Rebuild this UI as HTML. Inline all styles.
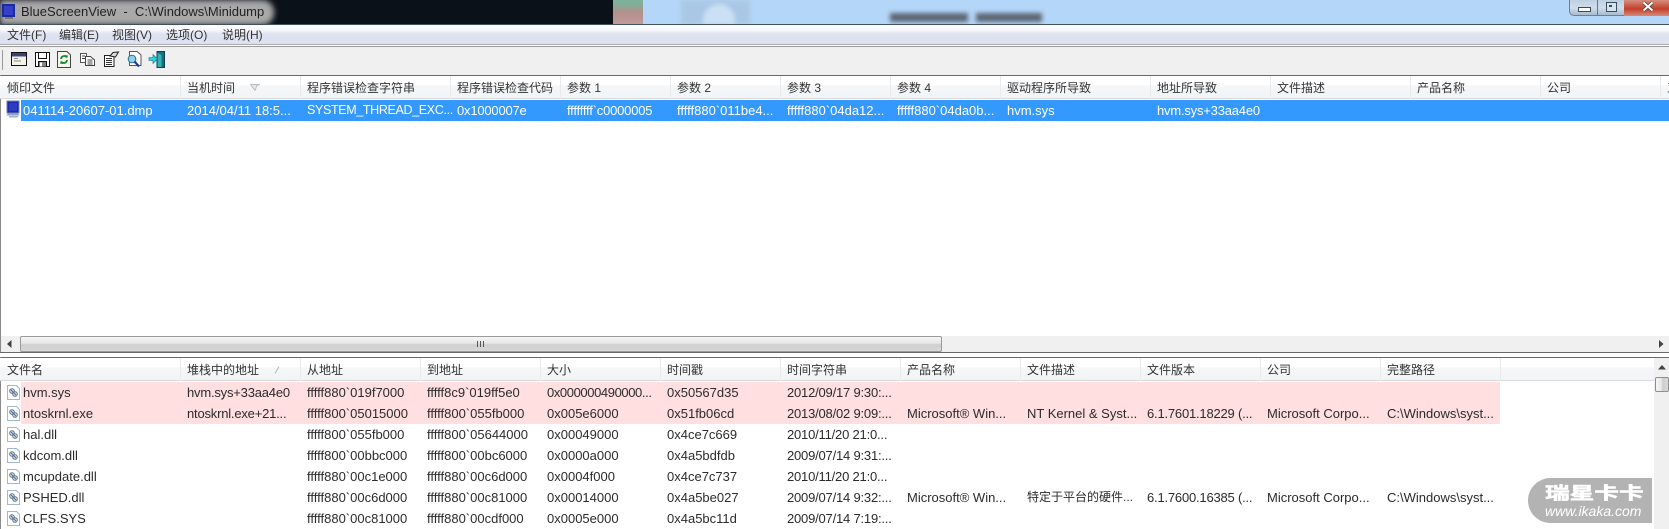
<!DOCTYPE html>
<html lang="zh">
<head>
<meta charset="utf-8">
<title>BlueScreenView</title>
<style>
html,body{margin:0;padding:0;background:#fff}
#w{position:relative;width:1669px;height:529px;overflow:hidden;background:#fff;font-family:"Liberation Sans","Noto Sans CJK SC",sans-serif;font-size:13px;color:#2b2b2b;filter:blur(.3px)}
.a{position:absolute}
.r{position:absolute;left:0;width:1669px;height:21px;line-height:21px}
.r span{position:absolute;top:0;white-space:nowrap}
.n{letter-spacing:-.2px}
.h{position:absolute;height:24px;line-height:24px;font-size:12px;color:#333;white-space:nowrap}
.s{position:absolute;width:1px;background:#e8eaec}
.m{position:absolute;top:26px;height:18px;line-height:18px;font-size:12px;color:#333;white-space:nowrap}
.hb{position:absolute;left:0;background:linear-gradient(#fff 0,#fff 40%,#f4f6f8 45%,#f2f4f6 100%);border-bottom:1px solid #d8dade}
svg{position:absolute;display:block;overflow:visible}
</style>
</head>
<body>
<div id="w">
<!-- title bar background -->
<div class="a" style="left:0;top:0;width:1669px;height:25px;background:#b4d6f8"></div>
<div class="a" style="left:681px;top:0;width:69px;height:25px;background:#a9c8e6;filter:blur(2px)"></div>
<div class="a" style="left:703px;top:4px;width:32px;height:21px;background:#cbe0f4;border-radius:16px 16px 0 0;filter:blur(2px)"></div>
<div class="a" style="left:0;top:0;width:613px;height:25px;background:#0b1118"></div>
<div class="a" style="left:613px;top:0;width:30px;height:25px;background:linear-gradient(#7fb09a 0,#7fb09a 15%,#b58f8a 50%,#bf9c9c 100%)"></div>
<div class="a" style="left:0;top:0;width:274px;height:25px;background:#a9a9a9;border-radius:0 12px 12px 0;filter:blur(3px)"></div>
<div class="a" style="left:890px;top:13px;width:78px;height:9px;background:#5c6672;filter:blur(2.5px)"></div>
<div class="a" style="left:976px;top:13px;width:66px;height:9px;background:#5c6672;filter:blur(2.5px)"></div>
<svg style="left:2px;top:3px" width="14" height="18" viewBox="0 0 14 18"><rect x="0" y="1" width="13" height="13" fill="#1a2aa0"/><rect x="2" y="3" width="9" height="9" fill="#3340c8"/><rect x="3" y="14" width="8" height="2" fill="#777"/></svg>
<div class="a" style="left:21px;top:3px;line-height:18px;font-size:13px;color:#222;white-space:pre">BlueScreenView  -  C:\Windows\Minidump</div>
<!-- window buttons -->
<div class="a" style="left:1569px;top:0;width:100px;height:16px;border:1px solid #6f7f90;border-top:0;border-right:0;border-radius:0 0 0 5px;box-sizing:border-box;background:linear-gradient(#bdd0e2,#cfdeec 50%,#a8bccf)"></div>
<div class="a" style="left:1597px;top:0;width:1px;height:15px;background:#66778a"></div>
<div class="a" style="left:1624px;top:0;width:45px;height:16px;background:linear-gradient(#d68f80,#c2402c 55%,#d88a78)"></div>
<div class="a" style="left:1578px;top:7px;width:11px;height:3px;border:1px solid #3d4a58;background:#fff"></div>
<div class="a" style="left:1606px;top:2px;width:9px;height:8px;border:1px solid #3d4a58;background:#d6e4f0"></div>
<div class="a" style="left:1609px;top:5px;width:3px;height:2px;background:#3d4a58"></div>
<svg style="left:1642px;top:2px" width="12" height="9" viewBox="0 0 12 9"><path d="M1.5 .5L10.5 8.500M10.5 .5L1.500 8.500" stroke="#4a3a38" stroke-width="3.4"/><path d="M1.5 .5L10.5 8.500M10.5 .5L1.500 8.500" stroke="#fff" stroke-width="2"/></svg>
<div class="a" style="left:0;top:24px;width:1669px;height:1px;background:#3f5060"></div>
<!-- menu -->
<div class="a" style="left:0;top:25px;width:1669px;height:20px;background:linear-gradient(#fff 0,#f5f7fc 25%,#dfe3f1 45%,#dde1ef 100%)"></div>
<div class="a" style="left:0;top:44px;width:1669px;height:1px;background:#a8aab0"></div>
<div class="m" style="left:7px">文件(F)</div>
<div class="m" style="left:59px">编辑(E)</div>
<div class="m" style="left:112px">视图(V)</div>
<div class="m" style="left:166px">选项(O)</div>
<div class="m" style="left:222px">说明(H)</div>
<!-- toolbar -->
<div class="a" style="left:0;top:45px;width:1669px;height:1px;background:#fff"></div>
<div class="a" style="left:0;top:46px;width:1669px;height:1px;background:#999"></div>
<div class="a" style="left:0;top:47px;width:1669px;height:28px;background:#f0f0f0"></div>
<div class="a" style="left:2px;top:50px;width:1px;height:20px;background:#9a9a9a"></div>
<svg style="left:11px;top:52px" width="16" height="14" viewBox="0 0 16 14"><rect x=".5" y=".5" width="15" height="13" fill="#f4f2e6" stroke="#111"/><rect x="1" y="1" width="14" height="3.500" fill="#3a4470"/><path d="M3 6.500h4M3 9h7" stroke="#888"/></svg>
<svg style="left:35px;top:52px" width="15" height="15" viewBox="0 0 15 15"><path d="M.5.500H14.500V14.500H.5Z" fill="#fff" stroke="#111"/><path d="M3.500 1V6.500H11.500V1" fill="none" stroke="#111"/><path d="M3.500 14.500V9.500H11.500V14.500" fill="#888" stroke="#111"/><rect x="5" y="10.500" width="2" height="4" fill="#fff"/></svg>
<svg style="left:57px;top:51px" width="14" height="17" viewBox="0 0 14 17"><path d="M.5.500H10L13.500 4V16.500H.5Z" fill="#f6f6ee" stroke="#444"/><path d="M4 8A3.200 3.200 0 0 1 9.500 6M10 9A3.200 3.200 0 0 1 4.500 11" fill="none" stroke="#108a28" stroke-width="1.800"/><path d="M8 4L11 4.500 10 7.500ZM6 13L3 12.500 4 9.500Z" fill="#108a28"/></svg>
<svg style="left:80px;top:53px" width="15" height="13" viewBox="0 0 15 13"><path d="M.5.500H6.500V9.500H.5Z" fill="#fff" stroke="#555"/><path d="M5.500 3.500H10.500L14.500 7V12.500H5.500Z" fill="#fff" stroke="#444"/><path d="M2 3h3M2 5.500h3M7.500 7h5M7.500 9h5M7.500 11h5" stroke="#444"/></svg>
<svg style="left:103px;top:51px" width="16" height="16" viewBox="0 0 16 16"><path d="M1.500 4.500H11V15.500H1.500Z" fill="#fff" stroke="#222"/><path d="M3 7.500h6M3 9.500h6M3 11.500h6M3 13.500h6" stroke="#333"/><path d="M7 5L10 1.500 15.500 1 12.500 6Z" fill="#ddd" stroke="#222"/></svg>
<svg style="left:127px;top:51px" width="15" height="17" viewBox="0 0 15 17"><path d="M2.500.5H10L14 4V14.500H2.500Z" fill="#fff" stroke="#555"/><circle cx="5" cy="8" r="3.800" fill="#8ed2e8" stroke="#2a6a9a"/><path d="M7.500 10.500L12 15.500" stroke="#1c3c94" stroke-width="2.200"/></svg>
<svg style="left:149px;top:51px" width="17" height="17" viewBox="0 0 17 17"><path d="M8 .5H15.500V16.500H8Z" fill="#1b6d7c" stroke="#0d3f4c"/><path d="M8.500 2L12.500 4V16H8.500Z" fill="#34b2bc"/><path d="M0 6.500H4V3.500L8.500 8 4 12.500V9.500H0Z" fill="#2dd4dc" stroke="#12707c" stroke-width=".6"/></svg>
<!-- top list -->
<div class="a" style="left:0;top:75px;width:1669px;height:1px;background:#696969"></div>
<div class="a" style="left:0;top:75px;width:1px;height:278px;background:#8a8a8a"></div>
<div class="hb" style="top:76px;width:1669px;height:22px"></div>
<div class="s" style="left:180px;top:76px;height:23px"></div>
<div class="s" style="left:300px;top:76px;height:23px"></div>
<div class="s" style="left:450px;top:76px;height:23px"></div>
<div class="s" style="left:560px;top:76px;height:23px"></div>
<div class="s" style="left:670px;top:76px;height:23px"></div>
<div class="s" style="left:780px;top:76px;height:23px"></div>
<div class="s" style="left:890px;top:76px;height:23px"></div>
<div class="s" style="left:1000px;top:76px;height:23px"></div>
<div class="s" style="left:1150px;top:76px;height:23px"></div>
<div class="s" style="left:1270px;top:76px;height:23px"></div>
<div class="s" style="left:1410px;top:76px;height:23px"></div>
<div class="s" style="left:1540px;top:76px;height:23px"></div>
<div class="s" style="left:1660px;top:76px;height:23px"></div>
<div class="h" style="left:7px;top:76px">倾印文件</div>
<div class="h" style="left:187px;top:76px">当机时间</div>
<svg style="left:250px;top:84px" width="11" height="7" viewBox="0 0 11 7"><path d="M.5.500H10L7 1.500 5 6.500Z" fill="#e6e6e6" stroke="#aeb4ba" stroke-width=".8"/></svg>
<div class="h" style="left:307px;top:76px">程序错误检查字符串</div>
<div class="h" style="left:457px;top:76px">程序错误检查代码</div>
<div class="h" style="left:567px;top:76px">参数 1</div>
<div class="h" style="left:677px;top:76px">参数 2</div>
<div class="h" style="left:787px;top:76px">参数 3</div>
<div class="h" style="left:897px;top:76px">参数 4</div>
<div class="h" style="left:1007px;top:76px">驱动程序所导致</div>
<div class="h" style="left:1157px;top:76px">地址所导致</div>
<div class="h" style="left:1277px;top:76px">文件描述</div>
<div class="h" style="left:1417px;top:76px">产品名称</div>
<div class="h" style="left:1547px;top:76px">公司</div>
<div class="h" style="left:1667px;top:76px">工</div>
<!-- selected row -->
<div class="a" style="left:21px;top:100px;width:1648px;height:21px;background:#3399ff"></div>
<svg style="left:6px;top:101px" width="15" height="18" viewBox="0 0 15 18"><rect x="1" y="0" width="12" height="12" fill="#1c2cb0"/><path d="M1 0h12v12H1Z" fill="none" stroke="#6f80a8"/><rect x="3" y="2" width="8" height="8" fill="#2e3cc4"/><path d="M0 14.500L3 12H11L14 14.500Z" fill="#8fa0b8"/><rect x="3" y="15" width="9" height="1.500" fill="#9cb0c8"/></svg>
<div class="r" style="top:100px;color:#fff">
<span style="left:23px">041114-20607-01.dmp</span>
<span style="left:187px">2014/04/11 18:5...</span>
<span style="left:307px;font-size:12.500px;letter-spacing:-.35px">SYSTEM_THREAD_EXC...</span>
<span style="left:457px" class="n">0x1000007e</span>
<span style="left:567px" class="n">ffffffff`c0000005</span>
<span style="left:677px">fffff880`011be4...</span>
<span style="left:787px">fffff880`04da12...</span>
<span style="left:897px">fffff880`04da0b...</span>
<span style="left:1007px">hvm.sys</span>
<span style="left:1157px" class="n">hvm.sys+33aa4e0</span>
</div>
<!-- horizontal scrollbar -->
<div class="a" style="left:1px;top:336px;width:1668px;height:16px;background:#f0f0f0"></div>
<svg style="left:7px;top:340px" width="5" height="8" viewBox="0 0 5 8"><path d="M4.500 0V8L0 4Z" fill="#444"/></svg>
<div class="a" style="left:20px;top:336px;width:922px;height:16px;box-sizing:border-box;border:1px solid #9a9a9a;border-radius:2px;background:linear-gradient(#f6f6f6,#e6e6e6 45%,#cfcfcf 55%,#d8d8d8)"></div>
<div class="a" style="left:477px;top:341px;width:7px;height:6px;background:repeating-linear-gradient(90deg,#555 0,#555 1px,transparent 1px,transparent 3px)"></div>
<svg style="left:1659px;top:340px" width="5" height="8" viewBox="0 0 5 8"><path d="M0 0V8L4.500 4Z" fill="#444"/></svg>
<div class="a" style="left:0;top:352px;width:1669px;height:1px;background:#696969"></div>
<!-- bottom list -->
<div class="a" style="left:0;top:357px;width:1669px;height:1px;background:#696969"></div>
<div class="a" style="left:0;top:357px;width:1px;height:172px;background:#8a8a8a"></div>
<div class="hb" style="top:358px;width:1654px;height:22px"></div>
<div class="s" style="left:180px;top:358px;height:23px"></div>
<div class="s" style="left:300px;top:358px;height:23px"></div>
<div class="s" style="left:420px;top:358px;height:23px"></div>
<div class="s" style="left:540px;top:358px;height:23px"></div>
<div class="s" style="left:660px;top:358px;height:23px"></div>
<div class="s" style="left:780px;top:358px;height:23px"></div>
<div class="s" style="left:900px;top:358px;height:23px"></div>
<div class="s" style="left:1020px;top:358px;height:23px"></div>
<div class="s" style="left:1140px;top:358px;height:23px"></div>
<div class="s" style="left:1260px;top:358px;height:23px"></div>
<div class="s" style="left:1380px;top:358px;height:23px"></div>
<div class="s" style="left:1500px;top:358px;height:23px"></div>
<div class="h" style="left:7px;top:358px">文件名</div>
<div class="h" style="left:187px;top:358px">堆栈中的地址</div>
<svg style="left:274px;top:366px" width="6" height="8" viewBox="0 0 6 8"><path d="M5 .5L1 7.500" stroke="#b4b8bc"/></svg>
<div class="h" style="left:307px;top:358px">从地址</div>
<div class="h" style="left:427px;top:358px">到地址</div>
<div class="h" style="left:547px;top:358px">大小</div>
<div class="h" style="left:667px;top:358px">时间戳</div>
<div class="h" style="left:787px;top:358px">时间字符串</div>
<div class="h" style="left:907px;top:358px">产品名称</div>
<div class="h" style="left:1027px;top:358px">文件描述</div>
<div class="h" style="left:1147px;top:358px">文件版本</div>
<div class="h" style="left:1267px;top:358px">公司</div>
<div class="h" style="left:1387px;top:358px">完整路径</div>
<!-- pink -->
<div class="a" style="left:21px;top:382px;width:1479px;height:42px;background:#ffdfdf"></div>
<!-- file icons -->
<svg style="left:7px;top:385px" width="13" height="15" viewBox="0 0 13 15"><path d="M.5.500H9.500L12.500 3.500V14.500H.5Z" fill="#fff" stroke="#a4b8cc"/><circle cx="5" cy="6" r="2.300" fill="#dfe6ee" stroke="#5a7490"/><circle cx="8" cy="9" r="2.300" fill="#dfe6ee" stroke="#5a7490"/><path d="M4 5L9 10" stroke="#5a7490" stroke-width="1.200"/></svg>
<svg style="left:7px;top:406px" width="13" height="15" viewBox="0 0 13 15"><path d="M.5.500H9.500L12.500 3.500V14.500H.5Z" fill="#fff" stroke="#a4b8cc"/><circle cx="5" cy="6" r="2.300" fill="#dfe6ee" stroke="#5a7490"/><circle cx="8" cy="9" r="2.300" fill="#dfe6ee" stroke="#5a7490"/><path d="M4 5L9 10" stroke="#5a7490" stroke-width="1.200"/></svg>
<svg style="left:7px;top:427px" width="13" height="15" viewBox="0 0 13 15"><path d="M.5.500H9.500L12.500 3.500V14.500H.5Z" fill="#fff" stroke="#a4b8cc"/><circle cx="5" cy="6" r="2.300" fill="#dfe6ee" stroke="#5a7490"/><circle cx="8" cy="9" r="2.300" fill="#dfe6ee" stroke="#5a7490"/><path d="M4 5L9 10" stroke="#5a7490" stroke-width="1.200"/></svg>
<svg style="left:7px;top:448px" width="13" height="15" viewBox="0 0 13 15"><path d="M.5.500H9.500L12.500 3.500V14.500H.5Z" fill="#fff" stroke="#a4b8cc"/><circle cx="5" cy="6" r="2.300" fill="#dfe6ee" stroke="#5a7490"/><circle cx="8" cy="9" r="2.300" fill="#dfe6ee" stroke="#5a7490"/><path d="M4 5L9 10" stroke="#5a7490" stroke-width="1.200"/></svg>
<svg style="left:7px;top:469px" width="13" height="15" viewBox="0 0 13 15"><path d="M.5.500H9.500L12.500 3.500V14.500H.5Z" fill="#fff" stroke="#a4b8cc"/><circle cx="5" cy="6" r="2.300" fill="#dfe6ee" stroke="#5a7490"/><circle cx="8" cy="9" r="2.300" fill="#dfe6ee" stroke="#5a7490"/><path d="M4 5L9 10" stroke="#5a7490" stroke-width="1.200"/></svg>
<svg style="left:7px;top:490px" width="13" height="15" viewBox="0 0 13 15"><path d="M.5.500H9.500L12.500 3.500V14.500H.5Z" fill="#fff" stroke="#a4b8cc"/><circle cx="5" cy="6" r="2.300" fill="#dfe6ee" stroke="#5a7490"/><circle cx="8" cy="9" r="2.300" fill="#dfe6ee" stroke="#5a7490"/><path d="M4 5L9 10" stroke="#5a7490" stroke-width="1.200"/></svg>
<svg style="left:7px;top:511px" width="13" height="15" viewBox="0 0 13 15"><path d="M.5.500H9.500L12.500 3.500V14.500H.5Z" fill="#fff" stroke="#a4b8cc"/><circle cx="5" cy="6" r="2.300" fill="#dfe6ee" stroke="#5a7490"/><circle cx="8" cy="9" r="2.300" fill="#dfe6ee" stroke="#5a7490"/><path d="M4 5L9 10" stroke="#5a7490" stroke-width="1.200"/></svg>
<!-- rows -->
<div class="r" style="top:382px">
<span style="left:23px">hvm.sys</span><span style="left:187px" class="n">hvm.sys+33aa4e0</span><span style="left:307px">fffff880`019f7000</span><span style="left:427px">fffff8c9`019ff5e0</span><span style="left:547px;letter-spacing:-.4px">0x000000490000...</span><span style="left:667px">0x50567d35</span><span style="left:787px" class="n">2012/09/17 9:30:...</span>
</div>
<div class="r" style="top:403px">
<span style="left:23px">ntoskrnl.exe</span><span style="left:187px" class="n">ntoskrnl.exe+21...</span><span style="left:307px">fffff800`05015000</span><span style="left:427px">fffff800`055fb000</span><span style="left:547px">0x005e6000</span><span style="left:667px">0x51fb06cd</span><span style="left:787px" class="n">2013/08/02 9:09:...</span><span style="left:907px">Microsoft® Win...</span><span style="left:1027px">NT Kernel &amp; Syst...</span><span style="left:1147px" class="n">6.1.7601.18229 (...</span><span style="left:1267px">Microsoft Corpo...</span><span style="left:1387px">C:\Windows\syst...</span>
</div>
<div class="r" style="top:424px">
<span style="left:23px">hal.dll</span><span style="left:307px">fffff800`055fb000</span><span style="left:427px">fffff800`05644000</span><span style="left:547px">0x00049000</span><span style="left:667px">0x4ce7c669</span><span style="left:787px" class="n">2010/11/20 21:0...</span>
</div>
<div class="r" style="top:445px">
<span style="left:23px">kdcom.dll</span><span style="left:307px">fffff800`00bbc000</span><span style="left:427px">fffff800`00bc6000</span><span style="left:547px">0x0000a000</span><span style="left:667px">0x4a5bdfdb</span><span style="left:787px" class="n">2009/07/14 9:31:...</span>
</div>
<div class="r" style="top:466px">
<span style="left:23px">mcupdate.dll</span><span style="left:307px">fffff880`00c1e000</span><span style="left:427px">fffff880`00c6d000</span><span style="left:547px">0x0004f000</span><span style="left:667px">0x4ce7c737</span><span style="left:787px" class="n">2010/11/20 21:0...</span>
</div>
<div class="r" style="top:487px">
<span style="left:23px">PSHED.dll</span><span style="left:307px">fffff880`00c6d000</span><span style="left:427px">fffff880`00c81000</span><span style="left:547px">0x00014000</span><span style="left:667px">0x4a5be027</span><span style="left:787px" class="n">2009/07/14 9:32:...</span><span style="left:907px">Microsoft® Win...</span><span style="left:1027px;font-size:12px">特定于平台的硬件...</span><span style="left:1147px" class="n">6.1.7600.16385 (...</span><span style="left:1267px">Microsoft Corpo...</span><span style="left:1387px">C:\Windows\syst...</span>
</div>
<div class="r" style="top:508px">
<span style="left:23px">CLFS.SYS</span><span style="left:307px">fffff880`00c81000</span><span style="left:427px">fffff880`00cdf000</span><span style="left:547px">0x0005e000</span><span style="left:667px">0x4a5bc11d</span><span style="left:787px" class="n">2009/07/14 7:19:...</span>
</div>
<!-- vertical scrollbar -->
<div class="a" style="left:1654px;top:358px;width:15px;height:171px;background:#f0f0f0"></div>
<svg style="left:1658px;top:365px" width="8" height="5" viewBox="0 0 8 5"><path d="M0 4.500H8L4 0Z" fill="#444"/></svg>
<div class="a" style="left:1655px;top:377px;width:14px;height:15px;box-sizing:border-box;border:1px solid #8f8f8f;border-radius:2px;background:linear-gradient(90deg,#f6f6f6,#e6e6e6 45%,#cfcfcf 55%,#d8d8d8)"></div>
<!-- watermark -->
<div class="a" style="left:1528px;top:478px;width:124px;height:45px;background:#b3b3b3;border-radius:23px 0 0 23px"></div>
<div class="a" style="left:1545px;top:484px;line-height:20px;font-size:17px;font-weight:bold;color:#fff;white-space:nowrap;transform:scaleX(1.45);transform-origin:0 0;-webkit-text-stroke:.5px #fff">瑞星卡卡</div>
<div class="a" style="left:1545px;top:504px;line-height:15px;font-size:14px;font-style:italic;color:#fff;white-space:nowrap">www.ikaka.com</div>
</div>
</body>
</html>
